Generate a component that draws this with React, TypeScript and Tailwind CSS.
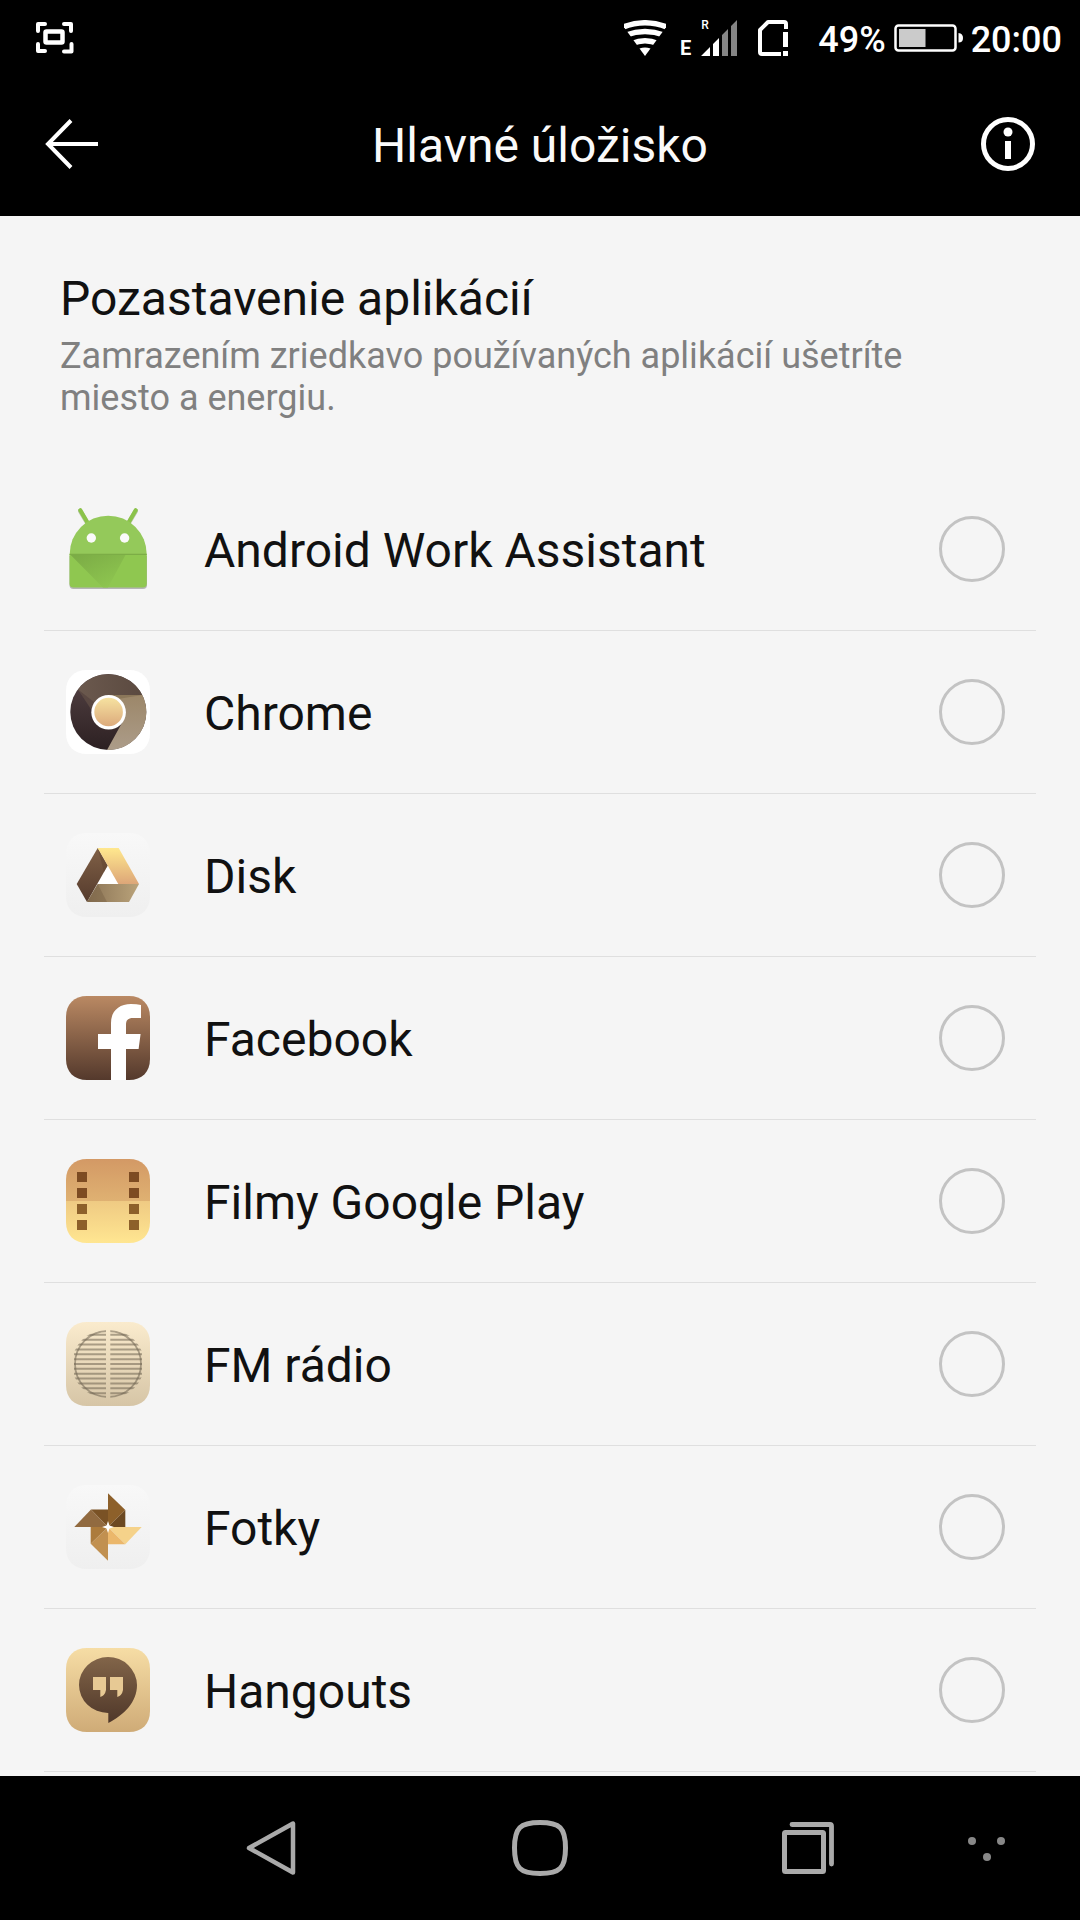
import type { ReactNode } from 'react'

const TILE =
  'M21 0H63C76 0 84 8 84 21V63C84 76 76 84 63 84H21C8 84 0 76 0 63V21C0 8 8 0 21 0Z'

interface GradientProps {
  id: string
  from: string
  to: string
  horizontal?: boolean
}

function Gradient({ id, from, to, horizontal }: GradientProps) {
  return (
    <linearGradient id={id} x1="0" y1="0" x2={horizontal ? 1 : 0} y2={horizontal ? 0 : 1}>
      <stop offset="0" stopColor={from} />
      <stop offset="1" stopColor={to} />
    </linearGradient>
  )
}

function AppIcon({ children }: { children: ReactNode }) {
  return (
    <svg viewBox="0 0 84 84" className="size-[84px] shrink-0" aria-hidden="true">
      {children}
    </svg>
  )
}

function AndroidIcon() {
  return (
    <AppIcon>
      <defs>
        <linearGradient id="android-fold" x1="0" y1="0" x2="0.8" y2="1">
          <stop offset="0" stopColor="#7aaa45" />
          <stop offset="1" stopColor="#8fc750" />
        </linearGradient>
      </defs>
      <path d="M3.5 49V78a4 4 0 0 0 4 4H77a4 4 0 0 0 4-4V49Z" fill="#b5b5b5" />
      <path
        d="M14.3 4 22 17M69.7 4 62 17"
        stroke="#b9c7a8"
        strokeWidth="4.5"
        strokeLinecap="round"
      />
      <path
        d="M14.3 3.2 22 16.5M69.7 3.2 62 16.5"
        stroke="#8bc34a"
        strokeWidth="4"
        strokeLinecap="round"
      />
      <path d="M3.7 47a38.5 38.3 0 0 1 77 0Z" fill="#94c95a" />
      <path d="M3.5 47H80.8V76.5a4 4 0 0 1-4 4H7.5a4 4 0 0 1-4-4Z" fill="#8fc750" />
      <path d="M3.7 47H60L42 80.5H37Z" fill="url(#android-fold)" />
      <path d="M3.7 47.3H80.7" stroke="#7cad46" strokeWidth="1.2" />
      <circle cx="25.3" cy="31" r="4.7" fill="#fafafa" />
      <circle cx="58.6" cy="31" r="4.7" fill="#fafafa" />
    </AppIcon>
  )
}

function ChromeIcon() {
  return (
    <AppIcon>
      <defs>
        <Gradient id="chrome-left" from="#544244" to="#2c2022" />
        <Gradient id="chrome-top" from="#6b594e" to="#5b4a40" horizontal />
        <Gradient id="chrome-right" from="#9c8769" to="#ac9c89" />
        <Gradient id="chrome-core" from="#f6e2a0" to="#dcaa7c" />
      </defs>
      <path d={TILE} fill="#fff" />
      <circle cx="42.3" cy="42" r="38" fill="url(#chrome-left)" />
      <path d="M12 19.5A38 38 0 0 1 76.3 25H42.3L25.5 38Z" fill="url(#chrome-top)" />
      <path d="M12 19.5 25.5 40 28 32Z" fill="#5a4842" />
      <path d="M42.3 25H76.3A38 38 0 0 1 41 80L57 51Z" fill="url(#chrome-right)" />
      <path d="M42.3 25H76.3L52 29Z" fill="#8b7759" />
      <circle cx="42.6" cy="42.3" r="17.3" fill="#fff" />
      <circle cx="42.6" cy="42" r="14.3" fill="url(#chrome-core)" />
    </AppIcon>
  )
}

function DriveIcon() {
  return (
    <AppIcon>
      <defs>
        <Gradient id="drive-tile" from="#f8f8f8" to="#efefef" />
        <Gradient id="drive-left" from="#806046" to="#553b2d" />
        <Gradient id="drive-right" from="#ffe88e" to="#dda678" />
        <Gradient id="drive-base" from="#8a7355" to="#baa37a" horizontal />
      </defs>
      <path d={TILE} fill="url(#drive-tile)" />
      <path d="M41.7 32 52.7 51.5H31Z" fill="#fff" />
      <path d="M31.7 15 41.7 32.5 21 69 10.7 51Z" fill="url(#drive-left)" />
      <path d="M31.7 15 41.7 32.5 38 39Z" fill="#5f4430" opacity="0.5" />
      <path d="M31.7 15H52.7L73 51H52.3Z" fill="url(#drive-right)" />
      <path d="M31.7 51H73L63 69H21Z" fill="url(#drive-base)" />
      <path d="M31.7 51 41 69H21Z" fill="#735d42" opacity="0.4" />
    </AppIcon>
  )
}

function FacebookIcon() {
  return (
    <AppIcon>
      <defs>
        <Gradient id="fb-tile" from="#ba8963" to="#54392c" />
      </defs>
      <path d={TILE} fill="url(#fb-tile)" />
      <path
        d="M45 84V53H32V38H45V27C45 15 53 8 65 8Q71 8 75 9V22H67C62 22 60 24 60 29V38H74.6L72.6 53H60V84Z"
        fill="#fff"
      />
    </AppIcon>
  )
}

function MoviesIcon() {
  const holes = [13, 29, 45, 61]
  return (
    <AppIcon>
      <defs>
        <linearGradient id="movies-tile" x1="0" y1="0" x2="0" y2="1">
          <stop offset="0" stopColor="#d39965" />
          <stop offset="0.5" stopColor="#dfb172" />
          <stop offset="0.5" stopColor="#efca83" />
          <stop offset="1" stopColor="#ffe691" />
        </linearGradient>
      </defs>
      <path d={TILE} fill="url(#movies-tile)" />
      {holes.map((y, i) => (
        <g key={y} fill={i < 2 ? '#7d4b22' : '#8d602a'}>
          <rect x="11" y={y} width="10" height="10" />
          <rect x="63" y={y} width="10" height="10" />
        </g>
      ))}
    </AppIcon>
  )
}

function RadioIcon() {
  const slats = [-6, -5, -4, -3, -2, -1, 0, 1, 2, 3, 4, 5, 6]
  return (
    <AppIcon>
      <defs>
        <Gradient id="radio-tile" from="#faebcd" to="#d6c5a6" />
        <clipPath id="radio-grille">
          <path d="M40 8V76A34 34 0 0 1 40 8ZM44.3 8V76A34 34 0 0 0 44.3 8Z" />
        </clipPath>
      </defs>
      <path d={TILE} fill="url(#radio-tile)" />
      <g clipPath="url(#radio-grille)" stroke="#6f6552" strokeOpacity="0.55">
        {slats.map(n => (
          <path key={n} d={`M8 ${42 + n * 4.86}H76`} strokeWidth="2" />
        ))}
        <circle cx="42" cy="42" r="33" fill="none" strokeWidth="1.8" />
      </g>
    </AppIcon>
  )
}

function PhotosIcon() {
  return (
    <AppIcon>
      <defs>
        <Gradient id="photos-tile" from="#f8f8f8" to="#efefef" />
      </defs>
      <path d={TILE} fill="url(#photos-tile)" />
      <path d="M42 42V24.5H25Z" fill="#7a5225" />
      <path d="M8.3 42 25 24.5 42 42Z" fill="#916a40" />
      <path d="M42 8.3 59.3 25 42 42Z" fill="#8d602a" />
      <path d="M59.3 25V42H42Z" fill="#6c4922" />
      <path d="M42 42H75.7L59.3 59.3Z" fill="#f5d28a" />
      <path d="M42 42 59.3 59.3H42Z" fill="#ebb76b" />
      <path d="M42 42V75.7L24.7 58.7Z" fill="#c19050" />
      <path d="M42 42H24.7V58.7Z" fill="#ac7b3c" />
      <path d="M42 36 43.5 40.5 48 42 43.5 43.5 42 48 40.5 43.5 36 42 40.5 40.5Z" fill="#fff" />
    </AppIcon>
  )
}

function HangoutsIcon() {
  return (
    <AppIcon>
      <defs>
        <Gradient id="hangouts-tile" from="#f6dda5" to="#cfab77" />
        <Gradient id="hangouts-bubble" from="#826549" to="#4f3729" />
      </defs>
      <path d={TILE} fill="url(#hangouts-tile)" />
      <path
        d="M42 9A29 28.5 0 0 1 71 37C71 54 58 67 42.3 75V65H42A29 28 0 0 1 42 9Z"
        fill="url(#hangouts-bubble)"
      />
      <path
        d="M27 29H40V42Q39 47.5 34.3 49V42H27ZM44 29H57V42Q56 47.5 51.3 49V42H44Z"
        fill="#e7c994"
      />
    </AppIcon>
  )
}

const APPS = [
  { name: 'Android Work Assistant', Icon: AndroidIcon },
  { name: 'Chrome', Icon: ChromeIcon },
  { name: 'Disk', Icon: DriveIcon },
  { name: 'Facebook', Icon: FacebookIcon },
  { name: 'Filmy Google Play', Icon: MoviesIcon },
  { name: 'FM rádio', Icon: RadioIcon },
  { name: 'Fotky', Icon: PhotosIcon },
  { name: 'Hangouts', Icon: HangoutsIcon },
]

function CaptureIcon() {
  return (
    <svg viewBox="0 0 38 32" className="h-8 w-[38px]" fill="none" stroke="#fff" aria-hidden="true">
      <path
        d="M2 9V2H9M28 2H35V9M2 22V29H9M28 29.5H35.5V22"
        strokeWidth="4"
        strokeLinecap="round"
        strokeLinejoin="round"
      />
      <rect x="9.5" y="9.5" width="17" height="11" rx="1" strokeWidth="4.5" />
    </svg>
  )
}

function WifiIcon() {
  return (
    <svg viewBox="0 0 42 36" className="h-9 w-[42px]" aria-hidden="true">
      <defs>
        <clipPath id="wifi-wedge">
          <path d="M21 36-3 3V0H45V3Z" />
        </clipPath>
      </defs>
      <g clipPath="url(#wifi-wedge)" fill="none" stroke="#fff" strokeWidth="5.5">
        <path d="M-2 7.5Q21-2 44 7.5" />
        <path d="M2 15Q21 8 40 15" />
        <path d="M8 23.5Q21 18 34 23.5" />
      </g>
      <path d="M15.5 28.5Q21 26.5 26.5 28.5L21 36Z" fill="#fff" />
    </svg>
  )
}

function SignalIcon() {
  return (
    <span className="flex h-9 items-end gap-[10px] text-white">
      <span className="text-xl leading-4 font-bold">E</span>
      <span className="relative">
        <span className="absolute -top-px left-0 text-[12px] leading-3 font-medium">R</span>
        <svg viewBox="0 0 36 36" className="size-9" aria-hidden="true">
          <path d="M0 36 9 27V36ZM12 24 18 18V36H12Z" fill="#fff" />
          <path d="M21 15 27 9V36H21ZM30 6 36 0V36H30Z" fill="#858585" />
        </svg>
      </span>
    </span>
  )
}

function SimIcon() {
  return (
    <svg viewBox="0 0 30 36" className="h-9 w-[30px]" fill="none" stroke="#fff" aria-hidden="true">
      <path
        d="M28 9V4Q28 2 26 2H10L2 10V32Q2 34 4 34H23"
        strokeWidth="4"
        strokeLinejoin="round"
      />
      <path d="M27.5 12V27M27.5 31V36" strokeWidth="5" />
    </svg>
  )
}

function BatteryIcon() {
  return (
    <svg viewBox="0 0 70 28" className="h-7 w-[70px]" aria-hidden="true">
      <rect x="1.5" y="1.5" width="60" height="25" rx="3" fill="none" stroke="#fff" strokeWidth="2.5" />
      <rect x="5" y="5" width="26.5" height="18" fill="#cbcbcb" />
      <path d="M64.5 9Q69 9.5 69 14T64.5 18.5Z" fill="#fff" />
    </svg>
  )
}

function StatusBar() {
  return (
    <div className="flex h-[72px] items-center justify-between pt-1 pr-[18px] pl-9">
      <CaptureIcon />
      <div className="flex items-center text-4xl font-medium text-white">
        <WifiIcon />
        <span className="pl-[14px]">
          <SignalIcon />
        </span>
        <span className="pl-[21px]">
          <SimIcon />
        </span>
        <span className="pt-1 pr-2 pl-[30px]">49%</span>
        <BatteryIcon />
        <span className="pt-1 pl-[7px]">20:00</span>
      </div>
    </div>
  )
}

function TitleBar() {
  return (
    <div className="flex h-36 items-center justify-between px-[45px]">
      <button type="button" aria-label="Späť">
        <svg
          viewBox="0 0 54 54"
          className="size-[54px]"
          fill="none"
          stroke="#fff"
          strokeWidth="4"
          aria-hidden="true"
        >
          <path d="M26 3.5 3 27 26 50.5M3 27H53" />
        </svg>
      </button>
      <h1 className="pt-1 text-5xl text-[#fafafa]">Hlavné úložisko</h1>
      <button type="button" aria-label="Informácie">
        <svg viewBox="0 0 54 54" className="size-[54px]" aria-hidden="true">
          <circle cx="27" cy="27" r="24.5" fill="none" stroke="#fff" strokeWidth="5" />
          <circle cx="27" cy="15" r="4.5" fill="#fff" />
          <rect x="24" y="24" width="6" height="18" fill="#fff" />
        </svg>
      </button>
    </div>
  )
}

function NavBar() {
  return (
    <nav className="grid h-36 grid-cols-[1fr_2fr_2fr_2fr_1fr] items-center justify-items-center bg-black">
      <button type="button" aria-label="Späť" className="col-start-2">
        <svg
          viewBox="0 0 56 56"
          className="size-14"
          fill="none"
          stroke="#aaa"
          strokeWidth="4.5"
          aria-hidden="true"
        >
          <path d="M51 3.5V52.5L7 28Z" strokeLinejoin="round" />
        </svg>
      </button>
      <button type="button" aria-label="Domov">
        <svg
          viewBox="0 0 56 56"
          className="size-14"
          fill="none"
          stroke="#aaa"
          strokeWidth="5"
          aria-hidden="true"
        >
          <path d="M28 2.5C48 2.5 53.5 8 53.5 28S48 53.5 28 53.5 2.5 48 2.5 28 8 2.5 28 2.5Z" />
        </svg>
      </button>
      <button type="button" aria-label="Posledné aplikácie">
        <svg viewBox="0 0 56 56" className="size-14" fill="none" stroke="#aaa" aria-hidden="true">
          <rect x="2.5" y="12.5" width="39" height="39" rx="1" strokeWidth="5" />
          <path d="M10 4.5H48Q49.5 4.5 49.5 6V44" strokeWidth="4.8" strokeLinecap="round" />
        </svg>
      </button>
      <button type="button" aria-label="Viac" className="mr-auto ml-[22px]">
        <svg viewBox="0 0 40 28" className="h-7 w-10" fill="#888" aria-hidden="true">
          <circle cx="5" cy="7" r="4" />
          <circle cx="34" cy="7" r="4" />
          <circle cx="20" cy="23" r="4" />
        </svg>
      </button>
    </nav>
  )
}

export default function App() {
  return (
    <div className="flex min-h-screen flex-col bg-[#f5f5f5] font-['Roboto',sans-serif]">
      <header className="bg-black">
        <StatusBar />
        <TitleBar />
      </header>

      <main className="flex-1">
        <section className="h-[252px] px-[60px] pt-[53px]">
          <h2 className="text-5xl leading-[60px] text-[#111]">Pozastavenie aplikácií</h2>
          <p className="pt-[6px] text-4xl leading-[42px] text-[#808080]">
            Zamrazením zriedkavo používaných aplikácií ušetríte miesto a energiu.
          </p>
        </section>

        <ul className="mx-11">
          {APPS.map(({ name, Icon }) => (
            <li key={name} className="border-b border-[#dfdfdf]">
              <label className="flex h-[162px] items-center gap-[54px] pr-[31px] pl-[22px]">
                <Icon />
                <span className="flex-1 pt-1 text-5xl text-[#111]">{name}</span>
                <input
                  type="checkbox"
                  className="size-[66px] appearance-none rounded-full border-3 border-[#c3c3c3] checked:bg-[#c3c3c3]"
                />
              </label>
            </li>
          ))}
        </ul>
      </main>

      <NavBar />
    </div>
  )
}
